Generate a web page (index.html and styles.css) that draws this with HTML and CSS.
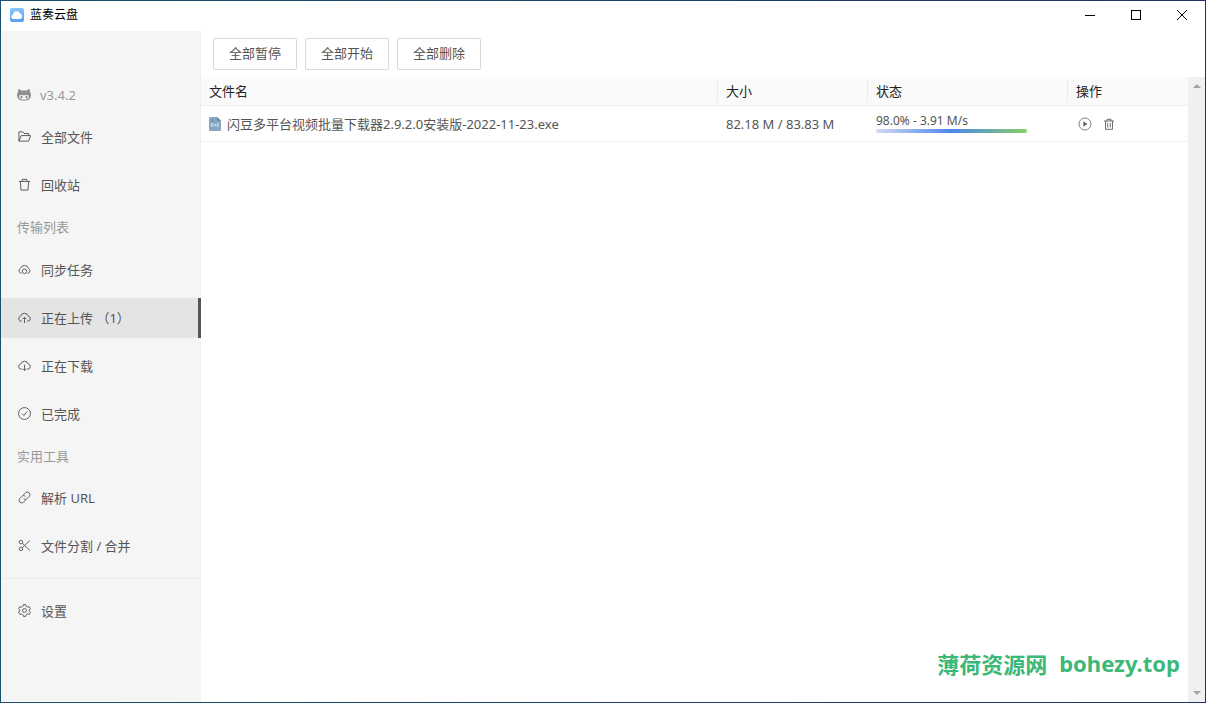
FILE: index.html
```html
<!DOCTYPE html>
<html lang="zh-CN">
<head>
<meta charset="utf-8">
<title>蓝奏云盘</title>
<link rel="stylesheet" href="styles.css">
</head>
<body>
<div class="window">
  <header class="titlebar">
    <svg class="app-icon" viewBox="0 0 14 14"><defs><linearGradient id="app" x1="0" y1="0" x2="0" y2="1"><stop offset="0" stop-color="#85c5fb"/><stop offset="1" stop-color="#5a9df5"/></linearGradient></defs><rect width="14" height="14" rx="2" fill="url(#app)"/><path d="M4 11A2.300 2.300 0 0 1 3 6.500 3.600 3.600 0 0 1 10 5.600 2.800 2.800 0 0 1 10.200 11Z" fill="#fff"/></svg>
    <h1 class="app-name">蓝奏云盘</h1>
    <div class="window-controls">
      <button class="window-button" aria-label="最小化"><svg viewBox="0 0 12 12" shape-rendering="crispEdges"><path d="M1 6.500h10"/></svg></button>
      <button class="window-button" aria-label="最大化"><svg viewBox="0 0 12 12" shape-rendering="crispEdges"><path d="M1.500 1.500h9v9h-9z"/></svg></button>
      <button class="window-button" aria-label="关闭"><svg viewBox="0 0 12 12"><path d="M1 1l10 10M11 1L1 11"/></svg></button>
    </div>
  </header>
  <div class="body">
    <aside class="sidebar">
      <nav class="menu">
        <a class="version" href="#"><svg class="cat" viewBox="0 0 14 14"><path fill="#8f8f8f" d="M1.300 1.200C2.600 1.200 3.600 1.900 4.300 2.500H9.700C10.400 1.900 11.400 1.200 12.700 1.200 13.100 2.200 13.100 3.200 12.900 4 13.700 4.900 14 6 13.900 7.600 13.700 10.900 12 12.800 7 12.800S.3 10.900.1 7.600C0 6 .3 4.900 1.100 4 .9 3.200.9 2.200 1.300 1.200Z"/><path fill="#f5f5f5" d="M3.800 7C5 6.800 6 7.200 7 7.200S9 6.800 10.200 7C11.600 7.200 12 8 11.900 9 11.800 11 10 11.700 7 11.700S2.200 11 2.100 9C2 8 2.400 7.200 3.800 7Z"/><ellipse cx="4.400" cy="9.200" rx="1" ry="1.400" fill="#8f8f8f"/><ellipse cx="9.600" cy="9.200" rx="1" ry="1.400" fill="#8f8f8f"/></svg>v3.4.2</a>
        <a class="item" href="#"><svg viewBox="0 0 14 14"><path d="M1 12V2H5L6.500 3.800H11.500V6M1 12H11.500L13.500 6H3.500L1 12Z"/></svg>全部文件</a>
        <a class="item" href="#"><svg viewBox="0 0 14 14"><path d="M1 3.700H13M4.500 3.700V1.500H9.500V3.700M2.500 3.700L3.200 13H10.800L11.500 3.700"/></svg>回收站</a>
        <h2 class="group">传输列表</h2>
        <a class="item" href="#"><svg viewBox="0 0 14 14"><path d="M3.700 11.200A2.900 2.900 0 0 1 2.800 5.700 4.400 4.400 0 0 1 11.200 5.700 2.900 2.900 0 0 1 10.300 11.200"/><circle cx="7" cy="9" r="2.400"/></svg>同步任务</a>
        <a class="item active" href="#" aria-current="page"><svg viewBox="0 0 14 14"><path d="M4.300 11H3.500A2.800 2.800 0 0 1 2.800 5.500 4.400 4.400 0 0 1 11.200 5.500 2.800 2.800 0 0 1 10.500 11H9.700M7 13V6.800M5 8.800L7 6.700 9 8.800"/></svg>正在上传 （1）</a>
        <a class="item" href="#"><svg viewBox="0 0 14 14"><path d="M4.300 11H3.500A2.800 2.800 0 0 1 2.800 5.500 4.400 4.400 0 0 1 11.200 5.500 2.800 2.800 0 0 1 10.500 11H9.700M7 6.300V12.300M5 10.400L7 12.500 9 10.400"/></svg>正在下载</a>
        <a class="item" href="#"><svg viewBox="0 0 14 14"><circle cx="7" cy="7" r="6.400"/><path d="M4.300 7.100L6.300 9.100 9.700 4.900"/></svg>已完成</a>
        <h2 class="group group-tools">实用工具</h2>
        <a class="item" href="#"><svg viewBox="0 0 14 14"><path d="M5.800 4.200L8 2A2.700 2.700 0 0 1 12 6L9.800 8.200A2.500 2.500 0 0 1 6 8.200M8.200 9.800L6 12A2.700 2.700 0 0 1 2 8L4.200 5.800A2.500 2.500 0 0 1 8 5.800"/></svg>解析 URL</a>
        <a class="item" href="#"><svg viewBox="0 0 14 14"><circle cx="3.200" cy="3.400" r="1.900"/><circle cx="3.200" cy="10.600" r="1.900"/><path d="M4.700 4.700L12.800 12.300M4.700 9.300L12.800 1.700"/></svg>文件分割 / 合并</a>
        <hr class="divider">
        <a class="item" href="#"><svg viewBox="0 0 14 14"><path d="M5.700 .7H8.300L8.800 2.600 10.200 3.400 12.100 2.900 13.400 5.200 12.100 6.500V7.500L13.400 8.800 12.100 11.100 10.200 10.600 8.800 11.400 8.300 13.300H5.700L5.200 11.400 3.800 10.600 1.900 11.100 .6 8.800 1.900 7.500V6.500L.6 5.200 1.900 2.900 3.800 3.400 5.200 2.600Z"/><circle cx="7" cy="7" r="2.100"/></svg>设置</a>
      </nav>
    </aside>
    <main class="content">
      <div class="toolbar">
        <button class="button">全部暂停</button>
        <button class="button">全部开始</button>
        <button class="button">全部删除</button>
      </div>
      <div class="list">
        <div class="list-view">
          <table class="files">
            <colgroup><col><col class="col-size"><col class="col-status"><col class="col-actions"></colgroup>
            <thead><tr><th>文件名</th><th>大小</th><th>状态</th><th>操作</th></tr></thead>
            <tbody><tr>
              <td><div class="file"><svg viewBox="0 0 12 14"><path d="M1 0H8L12 4V13A1 1 0 0 1 11 14H1A1 1 0 0 1 0 13V1A1 1 0 0 1 1 0Z" fill="#86a6c1"/><path d="M8 0L12 4H9A1 1 0 0 1 8 3Z" fill="#5d87aa"/><circle cx="3.500" cy="3.500" r="1.300" fill="#6f95b5"/><path d="M2.300 8H4.200M4.200 6.700H2.300V9.400H4.200M5 6.700L7.200 9.400M7.200 6.700L5 9.400M10 6.700H8.200V9.400H10M8.200 8H9.700" stroke="#d3e0eb" fill="none" stroke-width=".9"/></svg><span>闪豆多平台视频批量下载器2.9.2.0安装版-2022-11-23.exe</span></div></td>
              <td>82.18 M / 83.83 M</td>
              <td><div class="status"><span class="speed">98.0% - 3.91 M/s</span><div class="track"><div class="bar" style="width:98%"></div></div></div></td>
              <td><div class="actions">
                <button class="action" aria-label="开始"><svg viewBox="0 0 14 14"><circle cx="7" cy="7" r="6" fill="none" stroke="#7b8189"/><path d="M5.300 4.300L9.600 7 5.300 9.700Z" fill="#5f6874"/></svg></button>
                <button class="action" aria-label="删除"><svg viewBox="0 0 14 14" fill="none" stroke="#6b6b6b"><path d="M2 4H12M5 4V2.300H9V4M3.500 4V12.300H10.500V4M5.700 5.800V10.500M8.300 5.800V10.500"/></svg></button>
              </div></td>
            </tr></tbody>
          </table>
          <p class="brand">薄荷资源网 <span class="site">bohezy.top</span></p>
        </div>
        <div class="scrollbar"><svg viewBox="0 0 8 4"><path d="M0 4L4 0 8 4Z"/></svg><svg viewBox="0 0 8 4"><path d="M0 0L4 4 8 0Z"/></svg></div>
      </div>
    </main>
  </div>
</div>
</body>
</html>
```

FILE: styles.css
```css
* { box-sizing: border-box; }

body {
  margin: 0;
  color: #555;
  font: 13px/20px "Noto Sans", "Noto Sans CJK SC", sans-serif;
}

button { font: inherit; color: inherit; cursor: pointer; }
a { color: inherit; text-decoration: none; }
svg { display: block; flex: none; }

.window {
  display: flex;
  flex-direction: column;
  height: 100vh;
  border: 1px solid;
  border-image: linear-gradient(to right, #1a5070, #1d3461) 1;
  background: #fff;
}

.titlebar {
  display: flex;
  align-items: center;
  height: 30px;
  padding-bottom: 2px;
  padding-left: 9px;
  flex: none;
}
.app-icon { width: 14px; height: 14px; }
.app-name { margin: 0 0 0 6px; color: #000; font-size: 12px; font-weight: 400; }
.window-controls { display: flex; margin-left: auto; }
.window-button {
  display: grid;
  place-items: center;
  width: 46px;
  height: 28px;
  padding: 0;
  border: 0;
  background: none;
}
.window-button svg { width: 12px; height: 12px; fill: none; stroke: #000; }

.body { display: flex; flex: 1; min-height: 0; }

.sidebar { flex: none; width: 200px; background: #f5f5f5; }
.menu {
  display: flex;
  flex-direction: column;
  gap: 8px;
  padding: 52px 0 4px;
  border-right: 1px solid #f0f0f0;
}
.version {
  display: flex;
  align-items: center;
  gap: 9px;
  height: 26px;
  padding: 0 0 2px 16px;
  color: #999;
}
.cat { width: 14px; height: 14px; }
.item {
  display: flex;
  align-items: center;
  gap: 10px;
  height: 40px;
  margin-right: -1px;
  padding: 0 0 1px 17px;
  white-space: pre;
}
.item svg { width: 13px; height: 13px; fill: none; stroke: #555; }
.active { border-right: 3px solid #555; background: #e4e4e4; }
.group {
  height: 29px;
  margin: 0;
  padding-left: 16px;
  color: #999;
  font-size: 13px;
  font-weight: 400;
  line-height: 28px;
}
.group-tools { height: 28px; }
.divider { width: 100%; margin: 4px 0; border: 0; border-top: 1px solid #ececec; }

.content { display: flex; flex: 1; flex-direction: column; min-width: 0; }
.toolbar { display: flex; gap: 8px; padding: 7px 12px; }
.button {
  height: 32px;
  padding: 0 15px 2px;
  border: 1px solid #d9d9d9;
  border-radius: 2px;
  background: #fff;
}

.list { display: flex; flex: 1; min-height: 0; }
.list-view { display: flex; flex: 1; flex-direction: column; min-width: 0; }
.files { width: 100%; border-collapse: separate; border-spacing: 0; table-layout: fixed; }
.col-size { width: 150px; }
.col-status { width: 200px; }
.col-actions { width: 120px; }
.files th, .files td {
  padding: 0 8px;
  border-bottom: 1px solid #f0f0f0;
  text-align: left;
  font-weight: 400;
  white-space: nowrap;
}
.files th {
  height: 29px;
  background: linear-gradient(#ebebeb, #ebebeb) right center / 1px 22px no-repeat #fafafa;
  color: #222;
}
.files th:last-child { background: #fafafa; }
.files td { height: 36px; }
.file { display: flex; align-items: center; gap: 6px; }
.file svg { width: 12px; height: 14px; }
.status { width: 154px; padding-bottom: 1px; }
.speed { display: block; font-size: 12px; line-height: 16px; }
.track { height: 4px; }
.bar {
  height: 4px;
  border-radius: 2px;
  background: linear-gradient(to right, #d3d9f5, #4c86ec 50%, #87d068);
}
.actions { display: flex; gap: 10px; padding-left: 2px; }
.action { padding: 0; border: 0; background: none; }
.action svg { width: 14px; height: 14px; }

.brand {
  display: flex;
  align-items: center;
  gap: 12px;
  margin: auto 8px 24px auto;
  color: #3cb878;
  font: 700 22px/30px "Noto Sans CJK SC", sans-serif;
}
.site { font-family: "Noto Sans", sans-serif; }

.scrollbar {
  display: flex;
  flex: none;
  flex-direction: column;
  align-items: center;
  justify-content: space-between;
  width: 17px;
  padding: 7px 0;
  background: #f0f0f0;
}
.scrollbar svg { width: 8px; height: 4px; fill: #a3a3a3; }
```
